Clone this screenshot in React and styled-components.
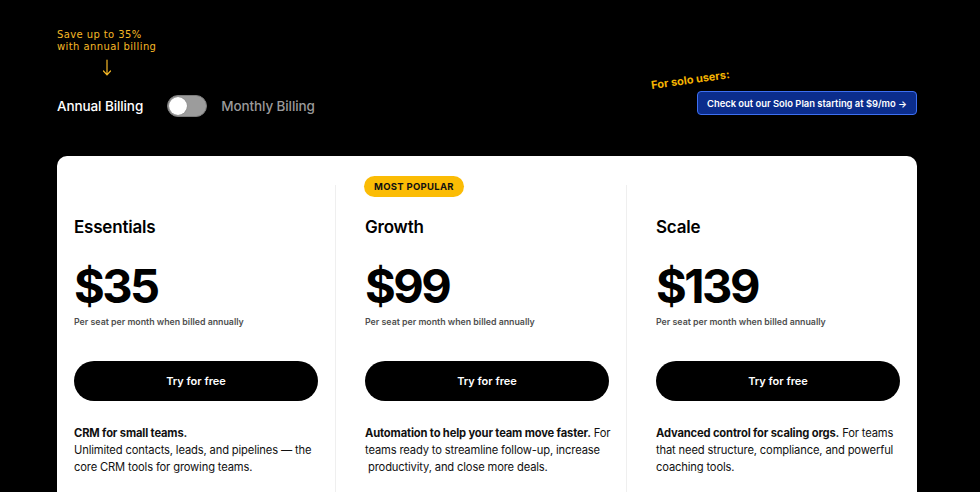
import React, { useState } from 'react'
import styled, { createGlobalStyle } from 'styled-components'

const GlobalStyle = createGlobalStyle`
  html, body {
    margin: 0;
    padding: 0;
    background: #000;
    font-family: Inter, "Noto Sans", "Liberation Sans", sans-serif;
  }
  * { box-sizing: border-box; }
`

const Page = styled.div`
  width: 980px;
  height: 492px;
  overflow: hidden;
  padding: 0 63px 0 57px;
  background: #000;
`

const Header = styled.div`
  height: 156px;
  display: flex;
  justify-content: space-between;
  align-items: flex-start;
`

const BillingSide = styled.div`
  display: flex;
  flex-direction: column;
  padding-top: 29px;
`

const Note = styled.div`
  font-family: "DejaVu Sans", sans-serif;
  font-size: 10px;
  line-height: 12px;
  letter-spacing: 0.4px;
  color: #f6b826;
`

const ArrowWrap = styled.div`
  margin: 6px 0 0 45px;
  height: 18px;
`

const ToggleRow = styled.div`
  margin-top: 18px;
  display: flex;
  align-items: center;
  font-size: 13.5px;
  font-weight: 500;
  letter-spacing: -0.1px;
`

const Label = styled.span`
  color: ${p => (p.$active ? '#fff' : '#9a9a9a')};
`

const Switch = styled.button`
  width: 40px;
  height: 22px;
  margin: 0 14px 0 24px;
  border-radius: 11px;
  border: 1.5px solid #7c7c7c;
  background: #9c9c9c;
  padding: 0 1px;
  display: flex;
  align-items: center;
  justify-content: ${p => (p.$on ? 'flex-end' : 'flex-start')};
  cursor: pointer;
  &::before {
    content: '';
    width: 18px;
    height: 18px;
    border-radius: 50%;
    background: #fff;
    box-shadow: 0 0 1px rgba(0,0,0,.4);
  }
`

const SoloSide = styled.div`
  margin-top: 79px;
  display: flex;
  flex-direction: column;
  align-items: flex-end;
`

const SoloLabel = styled.div`
  align-self: flex-start;
  margin-left: -45px;
  font-size: 11px;
  font-weight: 700;
  color: #f6b400;
  transform: rotate(-8deg);
  transform-origin: left bottom;
  line-height: 12px;
`

const SoloButton = styled.a`
  display: inline-flex;
  align-items: center;
  height: 24px;
  padding: 0 9px;
  border-radius: 4px;
  background: #0b2d8c;
  border: 1.5px solid #3d6ff2;
  color: #fff;
  font-size: 9.4px;
  font-weight: 600;
  text-decoration: none;
  white-space: nowrap;
`

const Card = styled.div`
  background: #fff;
  border-radius: 10px;
  height: 400px;
  display: grid;
  grid-template-columns: 278px 291px 291px;
`

const Column = styled.div`
  position: relative;
  margin-top: 29px;
  padding: 30px 17px 0 ${p => (p.$first ? '17px' : '29px')};
  border-left: ${p => (p.$first ? 'none' : '1px solid #efefef')};
`

const Badge = styled.span`
  position: absolute;
  top: -9px;
  left: 28px;
  height: 21px;
  padding: 0 10px;
  border-radius: 11px;
  background: #fbbc05;
  color: #111;
  font-size: 9.5px;
  font-weight: 700;
  letter-spacing: 0.3px;
  display: flex;
  align-items: center;
`

const PlanName = styled.h2`
  margin: 0;
  font-size: 17px;
  line-height: 24px;
  font-weight: 600;
  letter-spacing: -0.2px;
  color: #000;
`

const Price = styled.div`
  margin-top: 19px;
  font-size: 47px;
  line-height: 56px;
  font-weight: 700;
  letter-spacing: -2.5px;
  color: #000;
`

const Sub = styled.div`
  margin-top: 1px;
  font-size: 8.8px;
  line-height: 14px;
  font-weight: 600;
  color: #4f4f4f;
`

const TryButton = styled.button`
  margin-top: 32px;
  width: 244px;
  height: 40px;
  border: none;
  border-radius: 20px;
  background: #000;
  color: #fff;
  font-family: inherit;
  font-size: 11px;
  font-weight: 600;
  cursor: pointer;
`

const Desc = styled.p`
  margin: 24px 0 0;
  font-size: 11.2px;
  line-height: 17px;
  letter-spacing: -0.15px;
  white-space: nowrap;
  color: #111;
  b { font-weight: 700; }
`

const plans = [
  {
    name: 'Essentials',
    price: '$35',
    desc: (
      <>
        <b>CRM for small teams.</b>
        <br />
        Unlimited contacts, leads, and pipelines — the
        <br />
        core CRM tools for growing teams.
      </>
    ),
  },
  {
    name: 'Growth',
    price: '$99',
    popular: true,
    desc: (
      <>
        <b>Automation to help your team move faster.</b> For
        <br />
        teams ready to streamline follow-up, increase
        <br />
        &nbsp;productivity, and close more deals.
      </>
    ),
  },
  {
    name: 'Scale',
    price: '$139',
    desc: (
      <>
        <b>Advanced control for scaling orgs.</b> For teams
        <br />
        that need structure, compliance, and powerful
        <br />
        coaching tools.
      </>
    ),
  },
]

export default function App() {
  const [monthly, setMonthly] = useState(false)

  return (
    <Page>
      <GlobalStyle />
      <Header>
        <BillingSide>
          <Note>
            Save up to 35%
            <br />
            with annual billing
          </Note>
          <ArrowWrap>
            <svg width="10" height="17" viewBox="0 0 10 17" fill="none" stroke="#f6b826" strokeWidth="1.2" strokeLinecap="round">
              <path d="M5 1v14.5M1.5 12L5 15.8 8.5 12" />
            </svg>
          </ArrowWrap>
          <ToggleRow>
            <Label $active={!monthly}>Annual Billing</Label>
            <Switch $on={monthly} onClick={() => setMonthly(!monthly)} aria-label="toggle billing" />
            <Label $active={monthly}>Monthly Billing</Label>
          </ToggleRow>
        </BillingSide>
        <SoloSide>
          <SoloLabel>For solo users:</SoloLabel>
          <SoloButton href="#">Check out our Solo Plan starting at $9/mo →</SoloButton>
        </SoloSide>
      </Header>
      <Card>
        {plans.map((p, i) => (
          <Column key={p.name} $first={i === 0}>
            {p.popular && <Badge>MOST POPULAR</Badge>}
            <PlanName>{p.name}</PlanName>
            <Price>{p.price}</Price>
            <Sub>Per seat per month when billed annually</Sub>
            <TryButton>Try for free</TryButton>
            <Desc>{p.desc}</Desc>
          </Column>
        ))}
      </Card>
    </Page>
  )
}
